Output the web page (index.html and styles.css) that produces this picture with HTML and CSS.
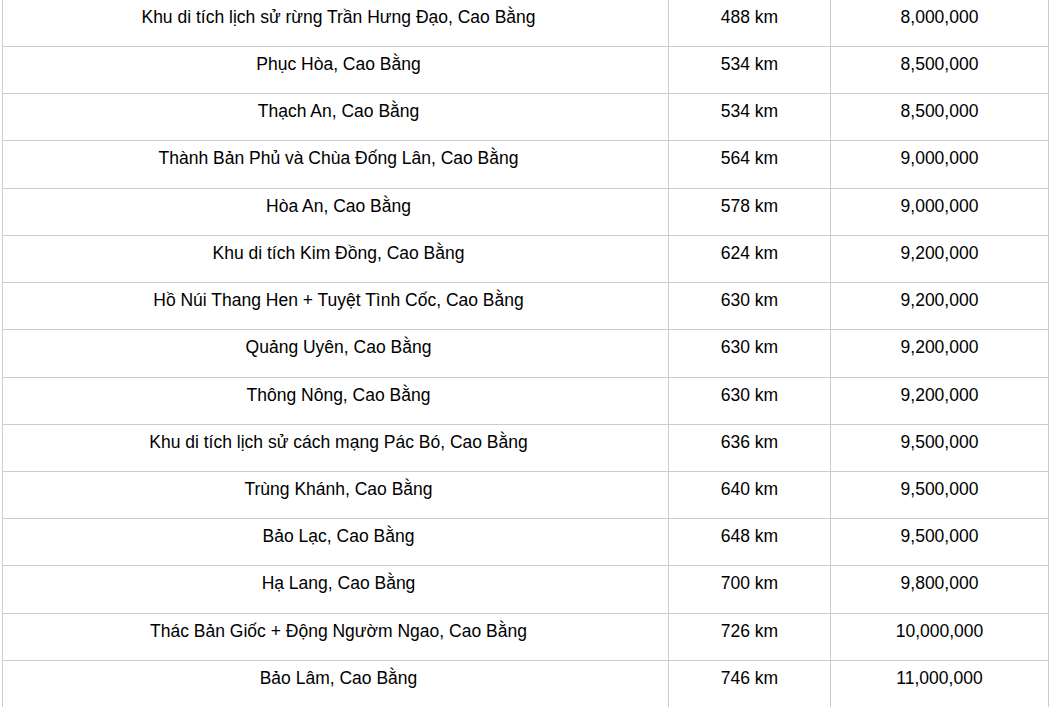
FILE: index.html
```html
<!DOCTYPE html>
<html lang="vi">
<head>
<meta charset="utf-8">
<title>Bảng giá</title>
<link rel="stylesheet" href="styles.css">
</head>
<body>
<div class="price-table">
  <div class="row"><div class="cell place">Khu di tích lịch sử rừng Trần Hưng Đạo, Cao Bằng</div><div class="cell dist">488 km</div><div class="cell price">8,000,000</div></div>
  <div class="row"><div class="cell place">Phục Hòa, Cao Bằng</div><div class="cell dist">534 km</div><div class="cell price">8,500,000</div></div>
  <div class="row"><div class="cell place">Thạch An, Cao Bằng</div><div class="cell dist">534 km</div><div class="cell price">8,500,000</div></div>
  <div class="row"><div class="cell place">Thành Bản Phủ và Chùa Đống Lân, Cao Bằng</div><div class="cell dist">564 km</div><div class="cell price">9,000,000</div></div>
  <div class="row"><div class="cell place">Hòa An, Cao Bằng</div><div class="cell dist">578 km</div><div class="cell price">9,000,000</div></div>
  <div class="row"><div class="cell place">Khu di tích Kim Đồng, Cao Bằng</div><div class="cell dist">624 km</div><div class="cell price">9,200,000</div></div>
  <div class="row"><div class="cell place">Hồ Núi Thang Hen + Tuyệt Tình Cốc, Cao Bằng</div><div class="cell dist">630 km</div><div class="cell price">9,200,000</div></div>
  <div class="row"><div class="cell place">Quảng Uyên, Cao Bằng</div><div class="cell dist">630 km</div><div class="cell price">9,200,000</div></div>
  <div class="row"><div class="cell place">Thông Nông, Cao Bằng</div><div class="cell dist">630 km</div><div class="cell price">9,200,000</div></div>
  <div class="row"><div class="cell place">Khu di tích lịch sử cách mạng Pác Bó, Cao Bằng</div><div class="cell dist">636 km</div><div class="cell price">9,500,000</div></div>
  <div class="row"><div class="cell place">Trùng Khánh, Cao Bằng</div><div class="cell dist">640 km</div><div class="cell price">9,500,000</div></div>
  <div class="row"><div class="cell place">Bảo Lạc, Cao Bằng</div><div class="cell dist">648 km</div><div class="cell price">9,500,000</div></div>
  <div class="row"><div class="cell place">Hạ Lang, Cao Bằng</div><div class="cell dist">700 km</div><div class="cell price">9,800,000</div></div>
  <div class="row"><div class="cell place">Thác Bản Giốc + Động Ngườm Ngao, Cao Bằng</div><div class="cell dist">726 km</div><div class="cell price">10,000,000</div></div>
  <div class="row"><div class="cell place">Bảo Lâm, Cao Bằng</div><div class="cell dist">746 km</div><div class="cell price">11,000,000</div></div>
</div>
</body>
</html>
```

FILE: styles.css
```css
html, body {
  margin: 0;
  padding: 0;
  background: #ffffff;
  overflow: hidden;
}
body {
  font-family: "Liberation Sans", Arial, sans-serif;
  font-size: 17.5px;
  color: #000000;
}
.price-table {
  margin: -1.23px 0 0 2px;
  width: 1047px;
  border-left: 1px solid #cccccc;
  border-right: 1px solid #cccccc;
  border-top: 1px solid #cccccc;
  box-sizing: border-box;
}
.row {
  display: flex;
  height: 47.23px;
  box-sizing: border-box;
  border-bottom: 1px solid #cccccc;
}
.cell {
  box-sizing: border-box;
  padding-top: 7px;
  text-align: center;
  line-height: 21px;
  white-space: nowrap;
}
.place {
  width: 666px;
  padding-left: 6px;
  border-right: 1px solid #cccccc;
}
.dist {
  width: 162px;
  border-right: 1px solid #cccccc;
}
.price {
  flex: 1;
}
```
